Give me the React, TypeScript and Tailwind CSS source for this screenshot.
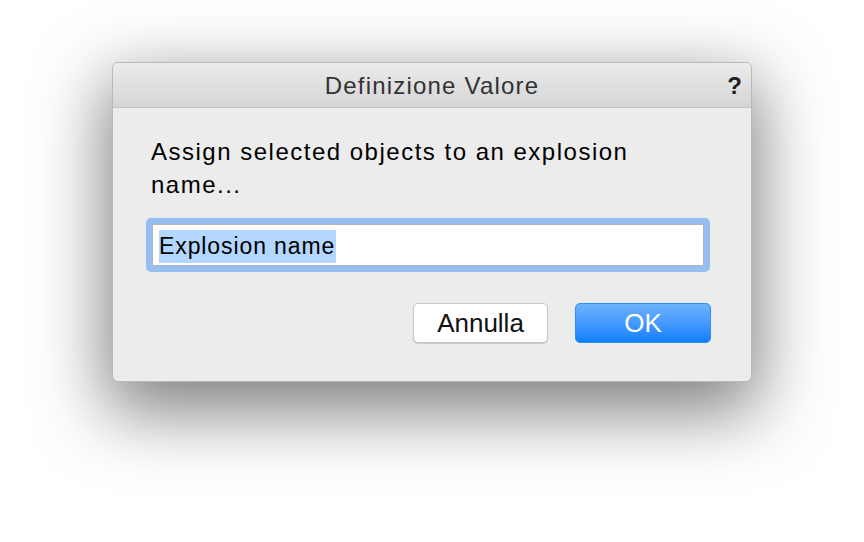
export default function App() {
  return (
    <div
      className="w-[864px] h-[542px] bg-white pl-[112px] pt-[62px]"
      style={{ fontFamily: '"Liberation Sans", Arial, sans-serif' }}
    >
      <div className="w-[640px] h-[320px] flex flex-col rounded-[6px] bg-[#ececec] border border-[#b9b9b9] shadow-[0_24px_70px_6px_rgba(0,0,0,0.5)] overflow-hidden">
        <div className="h-[45px] shrink-0 flex items-center relative border-b border-[#c4c4c4] bg-gradient-to-b from-[#ebebeb] to-[#d5d5d5]">
          <div className="flex-1 text-center text-[24px] tracking-[1.2px] text-[#333] leading-none pt-[2px]">
            Definizione Valore
          </div>
          <span className="absolute right-[9px] top-[11px] text-[24px] font-bold text-[#222] leading-none">
            ?
          </span>
        </div>
        <div className="flex-1 flex flex-col pl-[33px] pr-[41px] pt-[27px]">
          <p className="pl-[5px] text-[24px] tracking-[1.5px] leading-[33px] text-black w-[530px]">
            Assign selected objects to an explosion name...
          </p>
          <div className="mt-[17px] rounded-[5px] bg-[#97bef0] p-[6px]">
            <div className="h-[42px] bg-white border border-[#b4b4b4] flex items-center pl-[6px]">
              <span className="bg-[#b3d7ff] text-[23px] tracking-[0.9px] leading-[33px] text-black pr-[1px] mt-[3px]">
                Explosion name
              </span>
            </div>
          </div>
          <div className="flex justify-end gap-[27px] mt-[31px] mr-[-1px]">
            <button
              type="button"
              className="w-[135px] h-[40px] rounded-[5px] bg-white border border-[#c6c6c6] shadow-[0_1px_1px_rgba(0,0,0,0.15)] text-[26px] leading-none text-[#111]"
            >
              Annulla
            </button>
            <button
              type="button"
              className="w-[136px] h-[40px] rounded-[5px] bg-gradient-to-b from-[#6cb3fa] to-[#0a7ffe] border border-[#2e8ef8] text-[26px] leading-none text-white"
            >
              OK
            </button>
          </div>
        </div>
      </div>
    </div>
  );
}
